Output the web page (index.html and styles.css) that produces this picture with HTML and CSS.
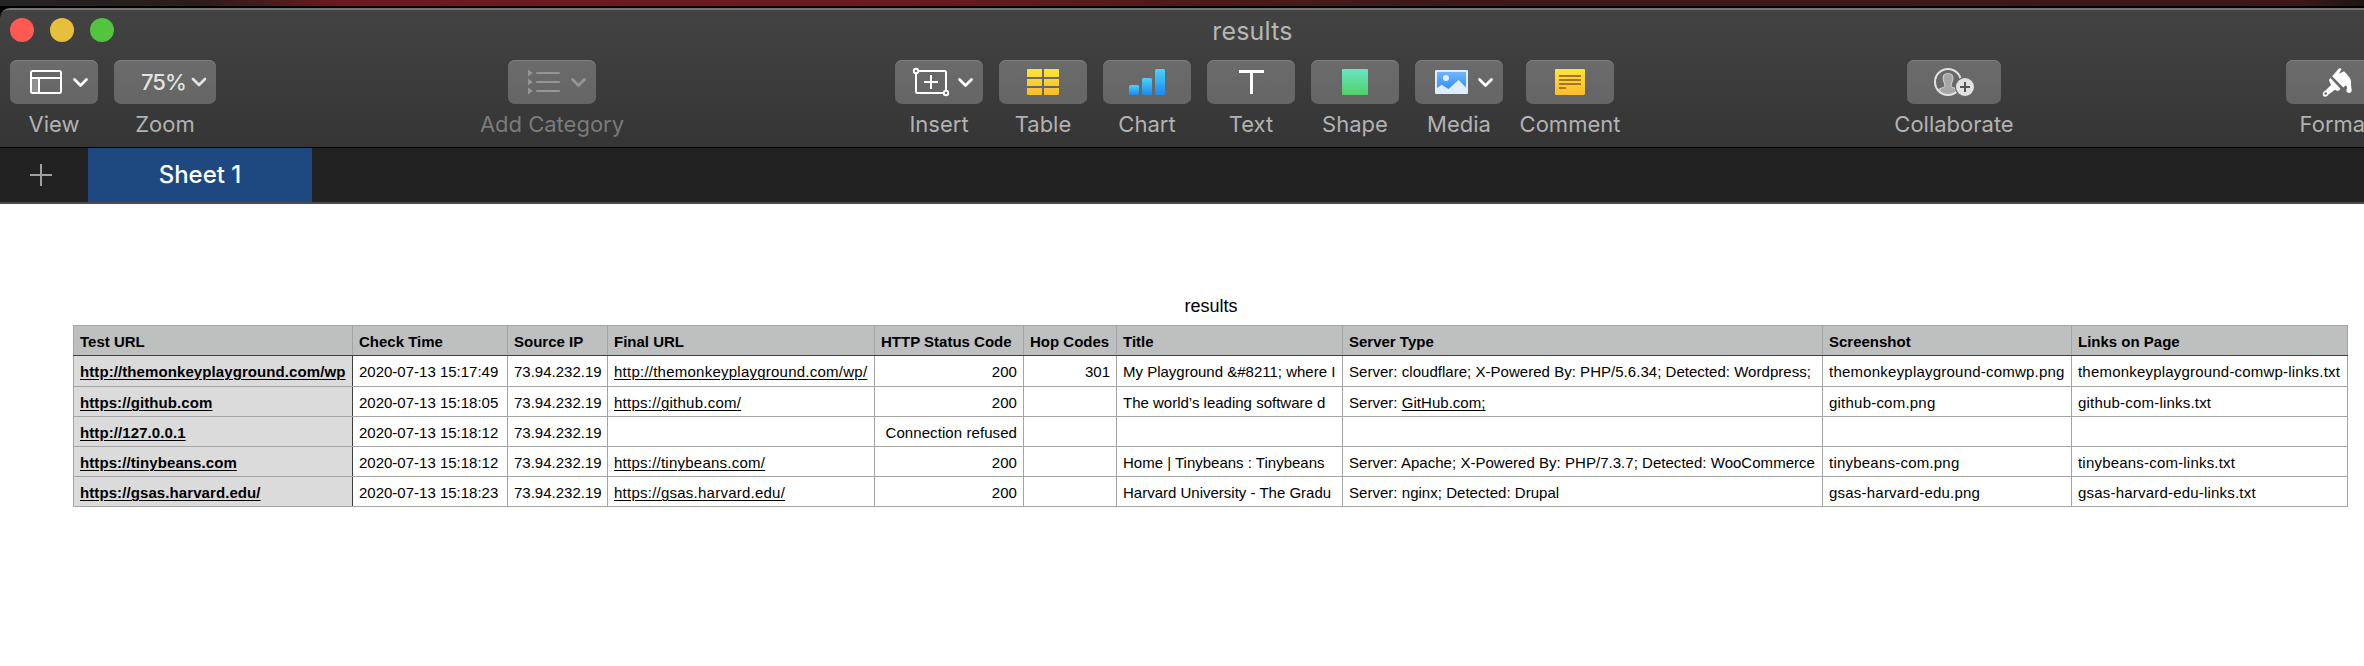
FILE: index.html
```
<!DOCTYPE html>
<html lang="en">
<head>
<meta charset="utf-8">
<title>results</title>
<link rel="stylesheet" href="styles.css">
</head>
<body>
<svg class="defs" width="0" height="0">
  <defs>
    <linearGradient id="yellow" gradientUnits="userSpaceOnUse" x1="0" y1="9" x2="0" y2="35"><stop offset="0" stop-color="#fbe63a"/><stop offset="1" stop-color="#fabb2c"/></linearGradient>
    <linearGradient id="blue" x1="0" y1="0" x2="0" y2="1"><stop offset="0" stop-color="#49d3fb"/><stop offset="1" stop-color="#2287ea"/></linearGradient>
    <linearGradient id="green" x1="0" y1="0" x2="0" y2="1"><stop offset="0" stop-color="#69e4c4"/><stop offset="1" stop-color="#51d067"/></linearGradient>
    <linearGradient id="sky" x1="0" y1="0" x2="0" y2="1"><stop offset="0" stop-color="#6fb5fc"/><stop offset="1" stop-color="#3490f7"/></linearGradient>
    <symbol id="chev" viewBox="0 0 16 10"><path d="M2 2L8 8L14 2" fill="none" stroke="currentColor" stroke-width="2.7" stroke-linecap="round" stroke-linejoin="round"/></symbol>
  </defs>
</svg>
<div class="desktop"></div>
<div class="window">
  <header class="chrome">
    <div class="titlebar">
      <div class="lights"><i class="light red"></i><i class="light amber"></i><i class="light green"></i></div>
      <div class="title">results</div>
    </div>
    <nav class="toolbar">
      <div class="tool view"><div class="btn"><svg width="88" height="44"><rect x="22" y="19" width="7" height="14" fill="#8f8f8f"/><rect x="21" y="11" width="30" height="22" rx="1.5" fill="none" stroke="#fff" stroke-width="2"/><path d="M21 18H51M29 18V33" stroke="#fff" stroke-width="2"/><use href="#chev" x="62.5" y="17.5" width="16" height="10"/></svg></div><span class="label">View</span></div>
      <div class="tool zoom"><div class="btn"><span class="percent">75%</span><svg width="16" height="10"><use href="#chev" width="16" height="10"/></svg></div><span class="label">Zoom</span></div>
      <div class="tool category"><div class="btn"><svg width="88" height="44"><path d="M20 9.5L24.8 13L20 16.5zM20 18.5L24.8 22L20 25.500zM20 27.500L24.8 31L20 34.500z" fill="currentColor"/><path d="M29 13H51M29 22H51M29 31H51" stroke="currentColor" stroke-width="2" stroke-linecap="round"/><use href="#chev" x="62.5" y="17.5" width="16" height="10"/></svg></div><span class="label">Add Category</span></div>
      <div class="tool insert"><div class="btn"><svg width="88" height="44"><rect x="21" y="11" width="30" height="22" rx="1.5" fill="none" stroke="#fff" stroke-width="2"/><g fill="#6b6b6b" stroke="#fff" stroke-width="2"><circle cx="21" cy="11" r="2.200"/><circle cx="51" cy="33" r="2.200"/></g><path d="M29 22H43M36 15V29" stroke="#fff" stroke-width="2"/><use href="#chev" x="62.5" y="17.5" width="16" height="10"/></svg></div><span class="label">Insert</span></div>
      <div class="tool"><div class="btn"><svg width="88" height="44"><path fill="url(#yellow)" d="M29 9H43V17H28V10Q28 9 29 9zM45 9H59Q60 9 60 10V17H45zM28 19H43V26H28zM45 19H60V26H45zM28 28H43V35H29Q28 35 28 34zM45 28H60V34Q60 35 59 35H45z"/></svg></div><span class="label">Table</span></div>
      <div class="tool"><div class="btn"><svg width="88" height="44" fill="url(#blue)"><rect x="26" y="25" width="10" height="10" rx="1.500"/><rect x="39" y="18" width="10" height="17" rx="1.500"/><rect x="52" y="9" width="10" height="26" rx="1.500"/></svg></div><span class="label">Chart</span></div>
      <div class="tool"><div class="btn"><svg width="88" height="44"><path d="M32 11.500H57M44.500 11V34" stroke="#fff" stroke-width="3"/></svg></div><span class="label">Text</span></div>
      <div class="tool"><div class="btn"><svg width="88" height="44"><rect x="31" y="9" width="26" height="26" rx="1" fill="url(#green)"/></svg></div><span class="label">Shape</span></div>
      <div class="tool"><div class="btn"><svg width="88" height="44"><rect x="20" y="10" width="33" height="24" rx="1" fill="#dfeeff"/><path d="M22 12H51V27.500L43.500 20L33.500 29L26.500 24.700L22 28z" fill="url(#sky)"/><circle cx="31" cy="18" r="3" fill="#dfeeff"/><use href="#chev" x="62.5" y="17.5" width="16" height="10"/></svg></div><span class="label">Media</span></div>
      <div class="tool comment"><div class="btn"><svg width="88" height="44"><rect x="29" y="9" width="30" height="26" rx="1" fill="url(#yellow)"/><path d="M33 16H55M33 20H55M33 24H55M33 28H40" stroke="#a8722a" stroke-width="2"/></svg></div><span class="label">Comment</span></div>
      <div class="tool collaborate"><div class="btn"><svg width="94" height="44"><path d="M41 13.500c-3.700 0-5.200 2-4.800 5.500c.2 3.500 2.100 4 1.700 7c-.3 2-5 2-6.700 4a12.500 12.500 0 0 0 19.600 0c-1.700-2-6.400-2-6.700-4c-.4-3 1.500-3.500 1.700-7c.4-3.500-1.100-5.500-4.800-5.500z" fill="#a6a6a6" stroke="#c9c9c9" stroke-width="1.200"/><circle cx="41" cy="22" r="13" fill="none" stroke="#e2e2e2" stroke-width="2"/><circle cx="58" cy="27" r="10.200" fill="#6b6b6b"/><circle cx="58" cy="27" r="9" fill="#e2e2e2"/><path d="M53 27H63M58 22V32" stroke="#555" stroke-width="2"/></svg></div><span class="label">Collaborate</span></div>
      <div class="tool format"><div class="btn"><svg width="102" height="44"><path fill="#fff" d="M46.200 16.200L52 9.500Q54 7.200 55.600 9L53 13.800L58 11.300Q61 14 63.500 17.500Q65.500 20 65 25L65.700 30Q65.700 33 63 33Q60 32.500 60.500 29.500Q62 26 59.500 25.500L57.300 27.500zM44.500 18L54.500 28.800Q53 31 51.500 31L49 29.700L42.500 34.500Q41 37 38.500 36.700Q36 35.500 37 32.700Q38 31 39.500 30.500L45 25L43 20.500Q43 19 44.500 18z"/><circle cx="39.700" cy="33.500" r="1.300" fill="#6b6b6b"/></svg></div><span class="label">Format</span></div>
    </nav>
  </header>
  <div class="tabs">
    <div class="add"><svg width="22" height="22"><path d="M0 11H22M11 0V22" stroke="#a0a0a0" stroke-width="2"/></svg></div>
    <div class="tab">Sheet 1</div>
  </div>
  <main class="canvas">
    <div class="sheet">
      <h1 class="caption">results</h1>
      <table class="grid">
        <colgroup><col class="c1"><col class="c2"><col class="c3"><col class="c4"><col class="c5"><col class="c6"><col class="c7"><col class="c8"><col class="c9"><col class="c10"></colgroup>
        <thead><tr><th>Test URL</th><th>Check Time</th><th>Source IP</th><th>Final URL</th><th>HTTP Status Code</th><th>Hop Codes</th><th>Title</th><th>Server Type</th><th>Screenshot</th><th>Links on Page</th></tr></thead>
        <tbody>
        <tr class="first"><th><u>http://themonkeyplayground.com/wp</u></th><td>2020-07-13 15:17:49</td><td>73.94.232.19</td><td><u>http://themonkeyplayground.com/wp/</u></td><td class="num">200</td><td class="num">301</td><td>My Playground &amp;#8211; where I</td><td>Server: cloudflare; X-Powered By: PHP/5.6.34; Detected: Wordpress;</td><td>themonkeyplayground-comwp.png</td><td>themonkeyplayground-comwp-links.txt</td></tr>
        <tr><th><u>https://github.com</u></th><td>2020-07-13 15:18:05</td><td>73.94.232.19</td><td><u>https://github.com/</u></td><td class="num">200</td><td></td><td>The world’s leading software d</td><td>Server: <u>GitHub.com;</u></td><td>github-com.png</td><td>github-com-links.txt</td></tr>
        <tr><th><u>http://127.0.0.1</u></th><td>2020-07-13 15:18:12</td><td>73.94.232.19</td><td></td><td class="num">Connection refused</td><td></td><td></td><td></td><td></td><td></td></tr>
        <tr><th><u>https://tinybeans.com</u></th><td>2020-07-13 15:18:12</td><td>73.94.232.19</td><td><u>https://tinybeans.com/</u></td><td class="num">200</td><td></td><td>Home | Tinybeans : Tinybeans</td><td>Server: Apache; X-Powered By: PHP/7.3.7; Detected: WooCommerce</td><td>tinybeans-com.png</td><td>tinybeans-com-links.txt</td></tr>
        <tr><th><u>https://gsas.harvard.edu/</u></th><td>2020-07-13 15:18:23</td><td>73.94.232.19</td><td><u>https://gsas.harvard.edu/</u></td><td class="num">200</td><td></td><td>Harvard University - The Gradu</td><td>Server: nginx; Detected: Drupal</td><td>gsas-harvard-edu.png</td><td>gsas-harvard-edu-links.txt</td></tr>
        </tbody>
      </table>
    </div>
  </main>
</div>
</body>
</html>
```
FILE: styles.css
```
* { box-sizing: border-box; }
body { margin: 0; width: 2364px; height: 666px; overflow: hidden; background: #000; font-family: Inter, sans-serif; }
.defs { display: block; position: absolute; }
.desktop { height: 7px; background: linear-gradient(90deg, #232321 0, #2a1c1d 200px, #6a1a1f 330px, #6a1b1f 900px, #541a1b 1150px, #3f191a 1400px, #3c1819 2300px, #1c1515 2364px); border-bottom: 1px solid #000; }
.desktop + .window { margin-top: 1px; }
.window { height: 658px; display: flex; flex-direction: column; border-radius: 10px 0 0 0; overflow: hidden; }
.chrome { height: 140px; flex: none; background: linear-gradient(#434343, #353535); border-top: 2px solid #757575; border-bottom: 1px solid #000; border-radius: 8px 0 0 0; }
.titlebar { height: 50px; display: grid; grid-template-columns: 130px 1fr 0; }
.lights { display: flex; gap: 16px; padding: 8px 0 0 10px; }
.light { width: 24px; height: 24px; border-radius: 50%; }
.red { background: #ff5a52; }
.amber { background: #e6c03c; }
.green { background: #53c43e; }
.title { padding: 5px 0 0 11px; text-align: center; font-size: 25px; line-height: 32px; color: #b6b6b6; letter-spacing: 0.2px; }
.toolbar { display: flex; gap: 16px; padding-left: 10px; }
.tool { width: 88px; flex: none; display: flex; flex-direction: column; align-items: center; color: #fff; }
.btn { width: 100%; height: 44px; border-radius: 7px; background: linear-gradient(#6b6b6b, #656565); box-shadow: inset 0 1px 0 #7d7d7d; display: flex; align-items: center; }
.btn svg { display: block; flex: none; }
.label { margin-top: 6px; font-size: 22px; line-height: 28px; color: #b2b2b2; white-space: nowrap; }
.zoom { width: 102px; }
.zoom .btn { justify-content: flex-end; gap: 5px; padding-right: 9px; color: #e3e3e3; }
.percent { font-size: 22px; font-weight: 500; letter-spacing: -0.9px; }
.category { margin-left: 276px; color: #959595; }
.category .label { color: #7b7b7b; }
.insert { margin-left: 283px; }
.comment { margin-left: 7px; }
.collaborate { width: 94px; margin-left: 277px; }
.format { width: 102px; margin-left: 269px; }
.format .label { padding-right: 2px; }
.tabs { height: 56px; flex: none; display: flex; background: #212121; border-bottom: 2px solid #4c4c4c; }
.add { width: 88px; padding: 16px 0 0 30px; }
.tab { width: 224px; background: #1d4980; color: #fff; text-align: center; font-size: 24px; font-weight: 500; line-height: 53px; }
.canvas { flex: 1; background: #fff; padding: 88px 0 0 73px; font-family: "Liberation Sans", Arial, sans-serif; color: #000; }
.sheet { width: 2276px; }
.caption { margin: 0; height: 33px; text-align: center; font-size: 18px; font-weight: 400; line-height: 29px; }
.grid { width: 2275px; table-layout: fixed; border-collapse: collapse; font-size: 15px; line-height: 18px; }
.c1 { width: 279px; } .c2 { width: 155px; } .c3 { width: 100px; } .c4 { width: 267px; } .c5 { width: 149px; }
.c6 { width: 93px; } .c7 { width: 226px; } .c8 { width: 480px; } .c9 { width: 249px; } .c10 { width: 276px; }
.grid th, .grid td { height: 30px; padding: 3px 6px 0; border: 1px solid #a5a5a5; text-align: left; white-space: nowrap; overflow: hidden; }
.grid thead th { background: #bdc0bf; border-bottom-color: #3f3f3f; }
.grid tbody th { background: #dbdbdb; border-right-color: #3f3f3f; letter-spacing: 0.09px; }
.grid td:nth-child(4) { letter-spacing: 0.24px; }
.grid td:nth-child(5) { letter-spacing: 0.08px; }
.grid td:nth-child(8) { letter-spacing: 0.03px; }
.grid td:nth-child(9) { letter-spacing: 0.22px; }
.grid td:nth-child(10) { letter-spacing: 0.2px; }
.grid .first th, .grid .first td { height: 31px; padding-top: 2px; }
.grid .num { text-align: right; }
.grid u { text-decoration-thickness: 1px; text-underline-offset: 2px; }
```
